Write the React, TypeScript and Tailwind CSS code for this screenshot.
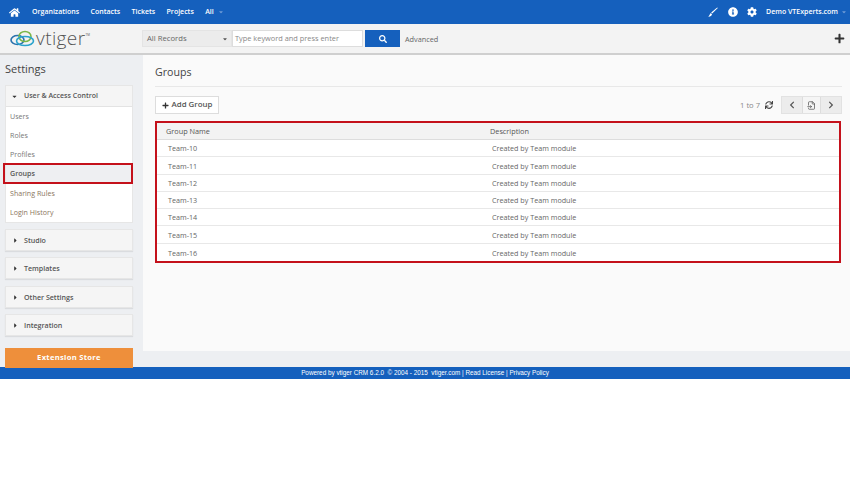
import { FaHome, FaPlus, FaSearch, FaChevronLeft, FaChevronRight, FaSync, FaCog, FaInfoCircle, FaCaretDown, FaCaretRight } from "react-icons/fa";
import { FileInput } from "lucide-react";

const font = { fontFamily: '"Open Sans", sans-serif' };

function Closed({ label, mt }: { label: string; mt: string }) {
  return (
    <div className={`${mt} h-[22px] flex items-center bg-[#f5f5f5] border border-[#e6e6e6] shadow-[0_1px_1px_rgba(0,0,0,0.08)] pl-[6px]`}>
      <FaCaretRight size={7} className="w-[12px] pr-[5px] text-[#333]" />
      <span className="text-[7.1px] font-semibold text-[#555]">{label}</span>
    </div>
  );
}

const links = ["Users", "Roles"];
const teams = ["Team-10", "Team-11", "Team-12", "Team-13", "Team-14", "Team-15", "Team-16"];

export default function App() {
  return (
    <div className="w-[850px] h-[485px] bg-white overflow-hidden" style={font}>
      <header className="h-[24px] bg-[#1560bd] flex items-center text-white text-[7px] font-semibold">
        <FaHome size={11} className="ml-[9px] mr-[12px]" />
        <nav className="flex gap-[11.4px]">
          <span>Organizations</span>
          <span>Contacts</span>
          <span>Tickets</span>
          <span>Projects</span>
          <span className="flex items-center gap-[4px]">All <FaCaretDown size={6} className="text-[#6d9ad6]" /></span>
        </nav>
        <div className="ml-auto flex items-center">
          <svg width="10" height="10" viewBox="0 0 10 10" className="mr-[10px]" fill="white">
            <polygon points="9.2,0.4 9.8,1 4.2,6.6 3.2,5.6" />
            <path d="M2.8 6 L4 7.2 C3.8 9 2 9.8 0.2 9.6 C1.4 9 1.6 7 2.8 6 Z" />
          </svg>
          <FaInfoCircle size={10} className="mr-[9px]" />
          <FaCog size={10} className="mr-[9px]" />
          <span>Demo VTExperts.com</span>
          <FaCaretDown size={6} className="text-[#6d9ad6] ml-[3px] mr-[3px]" />
        </div>
      </header>

      <div className="h-[31px] bg-[#f3f3f3] border-b-2 border-[#cfcfcf] flex items-center">
        <div className="w-[142px] pl-[10px] flex items-center shrink-0">
          <svg width="25" height="18" viewBox="0 0 25 18" fill="none" strokeWidth="1.6">
            <ellipse cx="7.5" cy="10" rx="6.5" ry="4.5" stroke="#2a72ad" />
            <ellipse cx="15" cy="6.5" rx="6" ry="5" stroke="#7ab648" />
            <ellipse cx="15" cy="11" rx="8.5" ry="4.5" stroke="#2aa3cc" />
          </svg>
          <span className="text-[19px] font-light leading-none text-[#555] ml-[1px] tracking-[0.4px]">vtiger</span>
          <span className="text-[3px] text-[#555] self-start mt-[4px]">TM</span>
        </div>
        <div className="w-[90px] h-[17px] bg-[#ececec] border border-[#e4e4e4] flex items-center pl-[4px] text-[7.7px] text-[#666]">
          All Records
          <FaCaretDown size={6} className="ml-auto mr-[3px] text-[#555]" />
        </div>
        <div className="w-[131px] h-[17px] bg-white border border-[#ddd] flex items-center pl-[2px] text-[7.4px] text-[#888]">Type keyword and press enter</div>
        <button className="ml-[2px] w-[35px] h-[17px] bg-[#1560bd] flex items-center justify-center text-white">
          <FaSearch size={8} />
        </button>
        <span className="ml-[5px] text-[7.3px] text-[#666] pt-[2px]">Advanced</span>
        <FaPlus size={11} className="ml-auto mr-[5px] text-[#333]" />
      </div>

      <div className="flex h-[312px] bg-[#edeff2]">
        <aside className="w-[143px] shrink-0 pl-[5px] pr-[10px]">
          <div className="text-[11px] text-[#444] mt-[5px] leading-[17px]">Settings</div>
          <div className="mt-[8px] bg-white border border-[#e6e6e6]">
            <div className="h-[21px] bg-[#f5f5f5] border-b border-[#e3e3e3] flex items-center pl-[5px]">
              <FaCaretDown size={7} className="w-[13px] pr-[6px] text-[#333]" />
              <span className="text-[7px] font-semibold text-[#555]">User &amp; Access Control</span>
            </div>
            <div className="text-[7.1px] text-[#777]">
              {links.map((l) => (
                <div key={l} className="h-[19px] flex items-center pl-[4px]">{l}</div>
              ))}
              <div className="h-[18px] flex items-center pl-[4px]">Profiles</div>
              <div className="relative h-[20px] flex items-center pl-[4px] font-semibold text-[#555] bg-[#eeeff2]">
                Groups
                <div className="absolute -left-[3px] -right-[1px] top-0 h-[21px] border-2 border-[#c4111b]" />
              </div>
              <div className="h-[20px] flex items-center pl-[4px] text-[#8a7560]">Sharing Rules</div>
              <div className="h-[19px] flex items-center pl-[4px] text-[#8a7560]">Login History</div>
            </div>
          </div>
          <Closed label="Studio" mt="mt-[6px]" />
          <Closed label="Templates" mt="mt-[6px]" />
          <Closed label="Other Settings" mt="mt-[7px]" />
          <Closed label="Integration" mt="mt-[6px]" />
          <div className="mt-[12px] h-[20px] bg-[#ee8f3b] flex items-center justify-center text-white text-[7.6px] font-bold tracking-[0.3px]">Extension Store</div>
        </aside>

        <main className="flex-1 h-[296px] bg-[#fafafa] pl-[12px] pr-[8px]">
          <h1 className="text-[10.6px] text-[#444] pt-[9px] leading-[17px] h-[32px] border-b border-[#e8e8e8] font-normal">Groups</h1>
          <div className="flex items-center h-[34px] pt-[2px]">
            <button className="w-[64px] h-[18px] bg-white border border-[#ddd] flex items-center justify-center gap-[3px] text-[7.9px] font-semibold text-[#555]">
              <FaPlus size={7} className="text-[#333]" />
              Add Group
            </button>
            <span className="ml-auto text-[7.6px] text-[#888] pt-[2px]">1 to 7</span>
            <FaSync size={8} className="ml-[5px] mr-[8px] text-[#444]" />
            <div className="w-[61px] h-[18px] bg-[#ececec] border border-[#e2e2e2] flex items-center text-[#555]">
              <span className="w-[20px] flex justify-center"><FaChevronLeft size={8} /></span>
              <span className="w-[19px] h-full flex justify-center items-center bg-[#f5f5f5] border-x border-[#ddd]"><FileInput size={9} /></span>
              <span className="flex-1 flex justify-center"><FaChevronRight size={8} /></span>
            </div>
          </div>
          <div className="border-2 border-[#c4111b] bg-white w-[686px]">
            <div className="h-[17px] pt-[1px] bg-[#f3f3f3] border-b border-[#ddd] flex items-center text-[7.3px] text-[#555]">
              <span className="w-[333px] pl-[9px]">Group Name</span>
              <span>Description</span>
            </div>
            {teams.map((t) => (
              <div key={t} className="h-[17.3px] pt-[1px] border-b border-[#e8e8e8] last:border-b-0 flex items-center text-[7.2px] text-[#666]">
                <span className="w-[335px] pl-[11px]">{t}</span>
                <span>Created by Team module</span>
              </div>
            ))}
          </div>
        </main>
      </div>

      <footer className="h-[12px] bg-[#1560bd] flex items-center justify-center text-white text-[6.35px]" style={{ fontFamily: '"Liberation Sans", sans-serif' }}>
        Powered by vtiger CRM 6.2.0&nbsp; © 2004 - 2015&nbsp; vtiger.com | Read License | Privacy Policy
      </footer>
    </div>
  );
}
